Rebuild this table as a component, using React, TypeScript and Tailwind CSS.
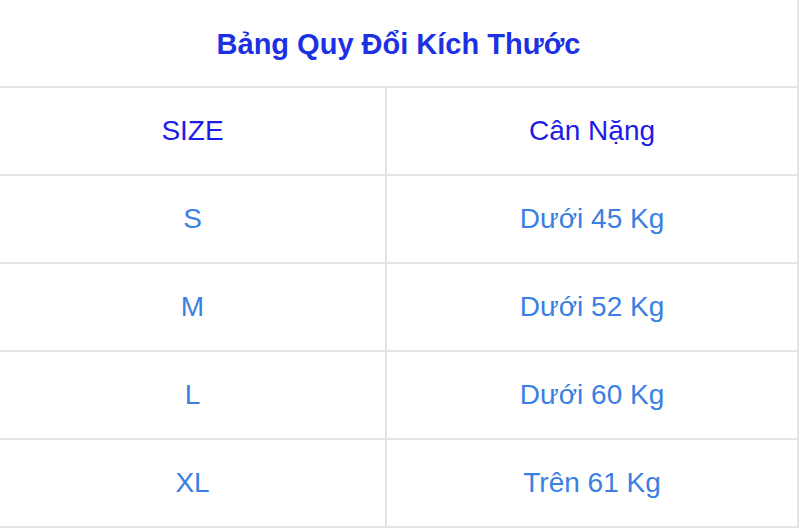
const rows = [
  { size: "S", weight: "Dưới 45 Kg" },
  { size: "M", weight: "Dưới 52 Kg" },
  { size: "L", weight: "Dưới 60 Kg" },
  { size: "XL", weight: "Trên 61 Kg" },
];

export default function App() {
  return (
    <main className="w-[800px] h-[529px] bg-white overflow-hidden font-['Liberation_Sans',Arial,sans-serif]">
      <div className="w-[799px] h-[86px] flex items-center justify-center border-r-2 border-[#e6e6e6]">
        <h1 className="text-[29px] font-bold text-[#1c30e4] pt-1">Bảng Quy Đổi Kích Thước</h1>
      </div>

      <div className="w-[799px] border-b-2 border-r-2 border-[#e4e4e4]">
        <div className="grid grid-cols-[385px_1fr] h-[88px] border-t-2 border-[#e4e4e4]">
          <div className="flex items-center justify-center text-[28px] text-[#1c1ce6]">SIZE</div>
          <div className="flex items-center justify-center text-[28px] text-[#1c1ce6] border-l-2 border-[#e4e4e4]">
            Cân Nặng
          </div>
        </div>
        {rows.map((r) => (
          <div key={r.size} className="grid grid-cols-[385px_1fr] h-[88px] border-t-2 border-[#e4e4e4]">
            <div className="flex items-center justify-center text-[28px] text-[#3b7fe2]">{r.size}</div>
            <div className="flex items-center justify-center text-[28px] text-[#3b7fe2] border-l-2 border-[#e4e4e4]">
              {r.weight}
            </div>
          </div>
        ))}
      </div>
    </main>
  );
}
